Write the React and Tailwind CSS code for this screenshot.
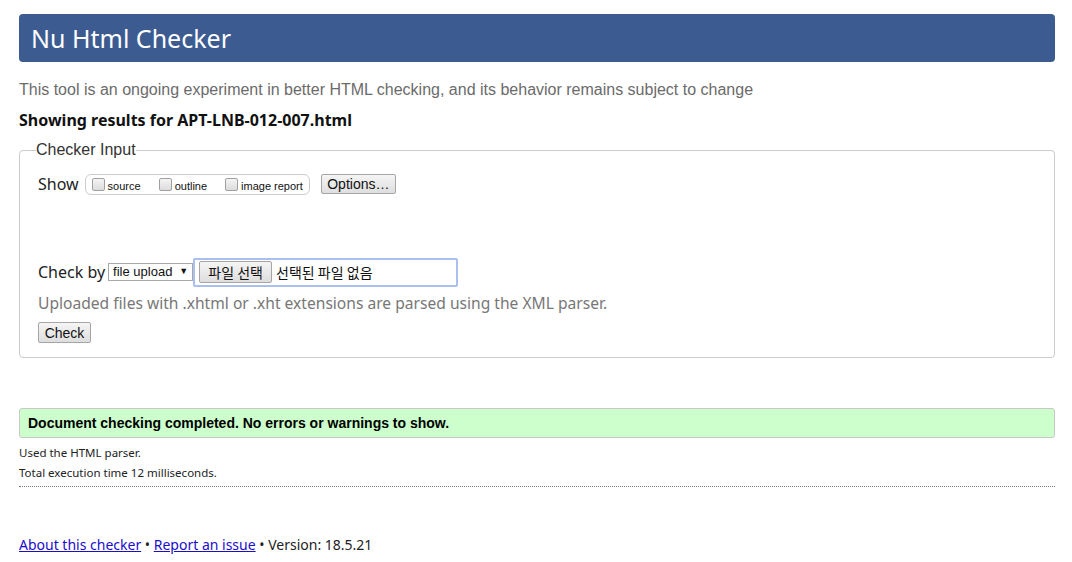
import React from 'react';

const malgun = "font-['Noto_Sans','Noto_Sans_CJK_KR',sans-serif]";
const arial = "font-['Liberation_Sans',Arial,sans-serif]";

function Box({ label }) {
  return (
    <label className="flex items-center gap-[3px] mr-[18px] last:mr-0">
      <span className="w-[13px] h-[13px] rounded-[2px] border border-[#a0a0a0] bg-gradient-to-b from-[#f4f4f4] to-[#dcdcdc]" />
      <span className={`${arial} text-[11px] text-[#111] mt-[4px]`}>{label}</span>
    </label>
  );
}

function Btn({ children, className = '' }) {
  return (
    <button className={`${arial} border border-[#a6a6a6] rounded-[2px] bg-gradient-to-b from-[#f5f5f5] to-[#dedede] text-[14px] text-[#111] leading-none ${className}`}>
      {children}
    </button>
  );
}

export default function App() {
  return (
    <div className="bg-white min-h-[562px] px-[19px] pt-[14px] pr-[17px]">
      {/* Encabezado */}
      <div className={`${malgun} h-[48px] rounded-[4px] bg-[#3c5b91] pl-[12px] text-[25px] leading-[48px] text-white`}>
        Nu Html Checker
      </div>

      <p className={`${arial} mt-[19px] text-[16px] leading-[18px] text-[#6b6b6b]`}>
        This tool is an ongoing experiment in better HTML checking, and its behavior remains subject to change
      </p>
      <p className={`${malgun} mt-[11px] text-[16px] leading-[20px] font-bold text-[#111]`}>
        Showing results for APT-LNB-012-007.html
      </p>

      <fieldset className="mt-[11px] h-[217px] border border-[#ccc] rounded-[4px] px-[18px]">
        <legend className={`${arial} ml-[-2px] text-[16px] leading-[18px] text-[#333]`}>Checker Input</legend>

        <div className="flex items-center mt-[14px] h-[22px]">
          <span className={`${malgun} text-[16px] text-[#222] mr-[6px]`}>Show</span>
          <div className="flex items-center h-[21px] border border-[#ccc] rounded-[6px] px-[6px]">
            <Box label="source" />
            <Box label="outline" />
            <Box label="image report" />
          </div>
          <Btn className="ml-[11px] h-[20px] w-[75px]">Options…</Btn>
        </div>

        <div className="flex items-center mt-[63px] h-[28px]">
          <span className={`${malgun} text-[16px] text-[#222] mr-[3px]`}>Check by</span>
          <div className={`${arial} flex items-center justify-between w-[85px] h-[18px] border border-[#a9a9a9] px-[4px] text-[13px] text-[#111]`}>
            <span>file upload</span>
            <span className="text-[9px]">▼</span>
          </div>
          <div className="flex items-center w-[265px] h-[29px] border-2 border-[#a9bff0] rounded-[2px] px-[4px]">
            <Btn className="h-[22px] w-[73px] !font-['Noto_Sans_CJK_KR',sans-serif]">파일 선택</Btn>
            <span className="ml-[4px] font-['Noto_Sans_CJK_KR',sans-serif] text-[14px] text-[#111]">선택된 파일 없음</span>
          </div>
        </div>

        <p className={`${malgun} mt-[6px] text-[15.6px] leading-[22px] text-[#777]`}>
          Uploaded files with .xhtml or .xht extensions are parsed using the XML parser.
        </p>

        <Btn className="mt-[8px] h-[21px] w-[53px]">Check</Btn>
      </fieldset>

      <div className={`${arial} mt-[50px] h-[30px] flex items-center rounded-[3px] border border-[#c8c8c8] bg-[#ccffcc] pl-[8px] text-[14px] font-bold text-black`}>
        Document checking completed. No errors or warnings to show.
      </div>

      <div className={`${malgun} mt-[5px] text-[11.5px] leading-[20px] text-[#222] border-b border-dotted border-[#777] pb-[3px]`}>
        <p>Used the HTML parser.</p>
        <p>Total execution time 12 milliseconds.</p>
      </div>

      <p className={`${malgun} mt-[47px] text-[14px] text-[#222]`}>
        <a href="#" className="text-[#1a0dcc] underline">About this checker</a>
        {' • '}
        <a href="#" className="text-[#1a0dcc] underline">Report an issue</a>
        {' • Version: 18.5.21'}
      </p>
    </div>
  );
}
